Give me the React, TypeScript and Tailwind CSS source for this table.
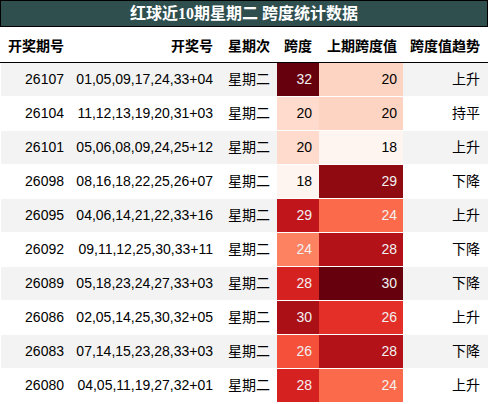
import React from "react"

type Row = {
  issue: string
  nums: string
  day: string
  span: number
  spanCls: string
  prev: number
  prevCls: string
  trend: string
}

const rows: Row[] = [
  { issue: "26107", nums: "01,05,09,17,24,33+04", day: "星期二", span: 32, spanCls: "bg-[#67000d] text-[#f1f1f1]", prev: 20, prevCls: "bg-[#fdd4c2] text-black", trend: "上升" },
  { issue: "26104", nums: "11,12,13,19,20,31+03", day: "星期二", span: 20, spanCls: "bg-[#fedbcc] text-black", prev: 20, prevCls: "bg-[#fdd4c2] text-black", trend: "持平" },
  { issue: "26101", nums: "05,06,08,09,24,25+12", day: "星期二", span: 20, spanCls: "bg-[#fedbcc] text-black", prev: 18, prevCls: "bg-[#fff5f0] text-black", trend: "上升" },
  { issue: "26098", nums: "08,16,18,22,25,26+07", day: "星期二", span: 18, spanCls: "bg-[#fff5f0] text-black", prev: 29, prevCls: "bg-[#900a12] text-[#f1f1f1]", trend: "下降" },
  { issue: "26095", nums: "04,06,14,21,22,33+16", day: "星期二", span: 29, spanCls: "bg-[#c0161b] text-[#f1f1f1]", prev: 24, prevCls: "bg-[#fb6a4a] text-[#f1f1f1]", trend: "上升" },
  { issue: "26092", nums: "09,11,12,25,30,33+11", day: "星期二", span: 24, spanCls: "bg-[#fc8262] text-[#f1f1f1]", prev: 28, prevCls: "bg-[#b21218] text-[#f1f1f1]", trend: "下降" },
  { issue: "26089", nums: "05,18,23,24,27,33+03", day: "星期二", span: 28, spanCls: "bg-[#d52221] text-[#f1f1f1]", prev: 30, prevCls: "bg-[#67000d] text-[#f1f1f1]", trend: "下降" },
  { issue: "26086", nums: "02,05,14,25,30,32+05", day: "星期二", span: 30, spanCls: "bg-[#ab1016] text-[#f1f1f1]", prev: 26, prevCls: "bg-[#e32f27] text-[#f1f1f1]", trend: "上升" },
  { issue: "26083", nums: "07,14,15,23,28,33+03", day: "星期二", span: 26, spanCls: "bg-[#f4503a] text-[#f1f1f1]", prev: 28, prevCls: "bg-[#b21218] text-[#f1f1f1]", trend: "下降" },
  { issue: "26080", nums: "04,05,11,19,27,32+01", day: "星期二", span: 28, spanCls: "bg-[#d52221] text-[#f1f1f1]", prev: 24, prevCls: "bg-[#fb6a4a] text-[#f1f1f1]", trend: "上升" },
]

const cols = "grid grid-cols-[70px_149px_57px_42px_84px_84px] whitespace-nowrap"

export default function App() {
  return (
    <div className="w-[488px] h-[404px] overflow-hidden bg-white font-['Liberation_Sans','Noto_Sans_CJK_SC',sans-serif] text-[14px] text-black">
      <div className="h-[27px] border border-black bg-[#2f4f4f] flex items-center justify-center text-white text-[16px] font-bold font-['Liberation_Serif','Noto_Sans_CJK_SC',serif]">
        红球近10期星期二 跨度统计数据
      </div>

      <div className={`${cols} pl-px h-[36px] border-b border-black font-bold items-center pt-[3px]`}>
        <div className="pl-[7px] pr-[6px]">开奖期号</div>
        <div className="px-[7px] text-right">开奖号</div>
        <div className="px-[7px] text-right">星期次</div>
        <div className="px-[7px] text-right">跨度</div>
        <div className="px-[6px] text-right">上期跨度值</div>
        <div className="px-[7px] text-right">跨度值趋势</div>
      </div>

      {rows.map((r, i) => (
        <div
          key={r.issue}
          className={`${cols} ml-px h-[34px] border-b border-white ${i % 2 === 0 ? "bg-[#f3f3f3]" : "bg-white"}`}
        >
          <div className="pr-[7px] flex items-center justify-end">{r.issue}</div>
          <div className="px-[7px] flex items-center justify-end">{r.nums}</div>
          <div className="px-[7px] flex items-center justify-end">{r.day}</div>
          <div className={`px-[7px] flex items-center justify-end ${r.spanCls}`}>{r.span}</div>
          <div className={`px-[6px] flex items-center justify-end ${r.prevCls}`}>{r.prev}</div>
          <div className="px-[7px] flex items-center justify-end">{r.trend}</div>
        </div>
      ))}
    </div>
  )
}
